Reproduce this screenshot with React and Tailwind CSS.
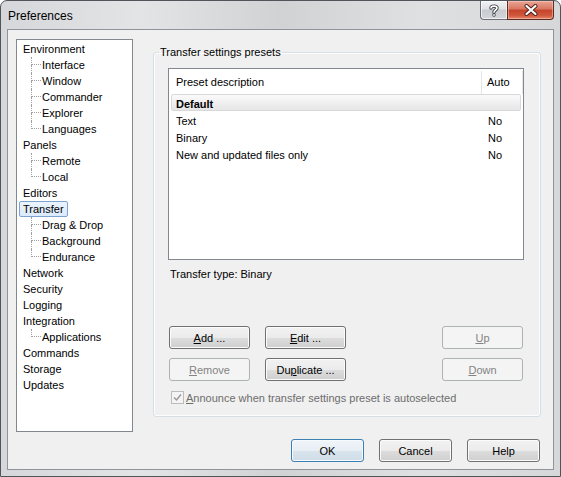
import { useState } from "react";

const treeItems = [
	{ label: "Environment" },
	{ label: "Interface", child: true },
	{ label: "Window", child: true },
	{ label: "Commander", child: true },
	{ label: "Explorer", child: true },
	{ label: "Languages", child: true, last: true },
	{ label: "Panels" },
	{ label: "Remote", child: true },
	{ label: "Local", child: true, last: true },
	{ label: "Editors" },
	{ label: "Transfer" },
	{ label: "Drag & Drop", child: true },
	{ label: "Background", child: true },
	{ label: "Endurance", child: true, last: true },
	{ label: "Network" },
	{ label: "Security" },
	{ label: "Logging" },
	{ label: "Integration" },
	{ label: "Applications", child: true, last: true },
	{ label: "Commands" },
	{ label: "Storage" },
	{ label: "Updates" },
];

const presets = [
	{ name: "Text", auto: "No" },
	{ name: "Binary", auto: "No" },
	{ name: "New and updated files only", auto: "No" },
];

const btnBase =
	"h-[23px] pt-[2px] flex items-center justify-center rounded-[3px] border leading-[13px]";
const btnNormal =
	"border-[#707070] text-black bg-[linear-gradient(to_bottom,#f2f2f2_0%,#ebebeb_50%,#dddddd_51%,#cfcfcf_100%)] shadow-[inset_0_0_0_1px_#fcfcfc]";
const btnDisabled = "border-[#adb2b5] text-[#838383] bg-[#f4f4f4]";
const btnDefault =
	"border-[#3c7fb1] text-black bg-[linear-gradient(to_bottom,#f0f5f9_0%,#e7eef4_50%,#d9e4ed_51%,#cfdce7_100%)] shadow-[inset_0_0_0_1px_#f4fafe]";

const Button = ({ children, disabled, isDefault, className = "" }) => (
	<button
		className={`${btnBase} ${
			disabled ? btnDisabled : isDefault ? btnDefault : btnNormal
		} ${className}`}
	>
		{children}
	</button>
);

const TreeRow = ({ item, selected, onSelect }) => {
	if (item.child) {
		return (
			<div className="h-[16px] flex items-center" onClick={onSelect}>
				<span className="ml-[14px] w-[10px] h-[16px] flex flex-col">
					<span className="h-[8px] border-l border-b border-dotted border-[#a0a0a0]" />
					{!item.last && (
						<span className="h-[8px] border-l border-dotted border-[#a0a0a0]" />
					)}
				</span>
				<span className="ml-[1px]">{item.label}</span>
			</div>
		);
	}
	return (
		<div className="h-[16px] flex items-center" onClick={onSelect}>
			<span
				className={`ml-[2px] h-[16px] px-[3px] flex items-center rounded-[2px] border ${
					selected
						? "border-[#7da2ce] bg-[linear-gradient(to_bottom,#ebf4fd,#dbeafc)]"
						: "border-transparent"
				}`}
			>
				{item.label}
			</span>
		</div>
	);
};

export default function App() {
	const [selected, setSelected] = useState("Transfer");

	return (
		<div className="w-[561px] h-[477px] flex flex-col rounded-t-[7px] border border-[#50555b] bg-[linear-gradient(to_right,#d5d7da,#e2e4e6_25%,#d0d2d4_50%,#dfe0e2_75%,#d6d7d9)] overflow-hidden font-['Liberation_Sans',Arial,sans-serif] text-[11px] text-black select-none">
			{/* Title bar */}
			<div className="h-[28px] flex items-start">
				<span className="pl-[7px] pt-[8px] text-[12px] leading-[14px]">
					Preferences
				</span>
				<div className="ml-auto mr-[6px] flex">
					<div className="w-[27px] h-[19px] flex items-center justify-center rounded-bl-[4px] border border-t-0 border-r-0 border-[#6c7076] bg-[linear-gradient(to_bottom,#f2f3f4_0%,#dfe1e4_45%,#c8cbcf_50%,#d3d6da_100%)] shadow-[inset_0_0_0_1px_rgba(255,255,255,0.6)]">
						<svg width="10" height="13" viewBox="0 0 10 13">
							<path
								d="M2 4 C2 1.5 8 1.5 8 4 C8 6 5 6 5 8.2"
								fill="none"
								stroke="#3a3d42"
								strokeWidth="3.4"
								strokeLinecap="round"
							/>
							<circle cx="5" cy="11" r="1.7" fill="#3a3d42" />
							<path
								d="M2 4 C2 1.5 8 1.5 8 4 C8 6 5 6 5 8.2"
								fill="none"
								stroke="#ffffff"
								strokeWidth="1.6"
								strokeLinecap="round"
							/>
							<circle cx="5" cy="11" r="0.9" fill="#ffffff" />
						</svg>
					</div>
					<div className="w-[47px] h-[19px] flex items-center justify-center rounded-br-[4px] border border-t-0 border-[#5e2b22] bg-[linear-gradient(to_bottom,#eaa596_0%,#d97660_45%,#c5432b_50%,#d0573c_80%,#e5876a_100%)] shadow-[inset_0_0_0_1px_rgba(255,220,210,0.45)]">
						<svg width="14" height="12" viewBox="0 0 14 12">
							<path
								d="M2.5 2 L11.5 10 M11.5 2 L2.5 10"
								stroke="#4a1f18"
								strokeWidth="4"
								strokeLinecap="round"
							/>
							<path
								d="M2.5 2 L11.5 10 M11.5 2 L2.5 10"
								stroke="#ffffff"
								strokeWidth="2.2"
								strokeLinecap="round"
							/>
						</svg>
					</div>
				</div>
			</div>

			{/* Client area */}
			<div className="mx-[6px] h-[441px] border border-[#8e949b] bg-[#f0f0f0] flex flex-col">
				<div className="flex pl-[8px] pt-[9px]">
					{/* Tree */}
					<div className="w-[117px] h-[393px] border border-[#828790] bg-white pt-[1px] leading-[13px]">
						{treeItems.map((item) => (
							<TreeRow
								key={item.label}
								item={item}
								selected={selected === item.label}
								onSelect={() => setSelected(item.label)}
							/>
						))}
					</div>

					{/* Group box */}
					<fieldset className="ml-[20px] mt-[7px] w-[388px] h-[371px] rounded-[3px] border border-[#d5dfe5] shadow-[inset_0_0_0_1px_#fcfdfe]">
						<legend className="ml-[5px] px-[1px] leading-[13px]">
							Transfer settings presets
						</legend>
						<div className="pl-[14px] flex flex-col">
							{/* List view */}
							<div className="mt-[9px] w-[356px] h-[192px] border border-[#828790] bg-white">
								<div className="h-[25px] pt-[2px] flex items-center">
									<div className="w-[313px] h-full flex items-center pl-[7px] border-r border-[#e5e5e5]">
										Preset description
									</div>
									<div className="flex-1 h-full flex items-center pl-[5px] border-r border-[#e5e5e5]">
										Auto
									</div>
								</div>
								<div className="mx-[2px] h-[17px] pt-[3px] flex items-center pl-[4px] rounded-[2px] border border-[#d9d9d9] bg-[linear-gradient(to_bottom,#fafafa,#e6e6e6)] font-bold">
									Default
								</div>
								{presets.map((p) => (
									<div key={p.name} className="h-[17px] pt-[4px] flex items-center">
										<div className="w-[314px] pl-[7px]">{p.name}</div>
										<div className="pl-[5px]">{p.auto}</div>
									</div>
								))}
							</div>

							<div className="mt-[8px] ml-[2px] leading-[13px]">
								Transfer type: Binary
							</div>

							<div className="mt-[45px] ml-[1px] flex">
								<Button className="w-[81px]">
									<span>
										<u>A</u>dd ...
									</span>
								</Button>
								<Button className="w-[81px] ml-[15px]">
									<span>
										<u>E</u>dit ...
									</span>
								</Button>
								<Button disabled className="w-[81px] ml-[96px]">
									<span>
										<u>U</u>p
									</span>
								</Button>
							</div>
							<div className="mt-[9px] ml-[1px] flex">
								<Button disabled className="w-[81px]">
									<span>
										<u>R</u>emove
									</span>
								</Button>
								<Button className="w-[81px] ml-[15px]">
									<span>
										Du<u>p</u>licate ...
									</span>
								</Button>
								<Button disabled className="w-[81px] ml-[96px]">
									<span>
										<u>D</u>own
									</span>
								</Button>
							</div>

							<div className="mt-[9px] ml-[3px] flex items-center">
								<span className="w-[13px] h-[13px] border border-[#bcbcbc] bg-[#f4f4f4] flex items-center justify-center">
									<svg width="9" height="9" viewBox="0 0 9 9">
										<path
											d="M1 4.5 L3.5 7 L8 1.5"
											fill="none"
											stroke="#9a9a9a"
											strokeWidth="1.5"
										/>
									</svg>
								</span>
								<span className="ml-[2px] pt-[2px] text-[#6d6d6d] leading-[13px]">
									<u>A</u>nnounce when transfer settings preset is autoselected
								</span>
							</div>
						</div>
					</fieldset>
				</div>

				{/* Dialog buttons */}
				<div className="mt-[7px] flex justify-end pr-[13px]">
					<Button isDefault className="w-[73px]">
						OK
					</Button>
					<Button className="w-[73px] ml-[15px]">Cancel</Button>
					<Button className="w-[73px] ml-[15px]">Help</Button>
				</div>
			</div>
		</div>
	);
}
